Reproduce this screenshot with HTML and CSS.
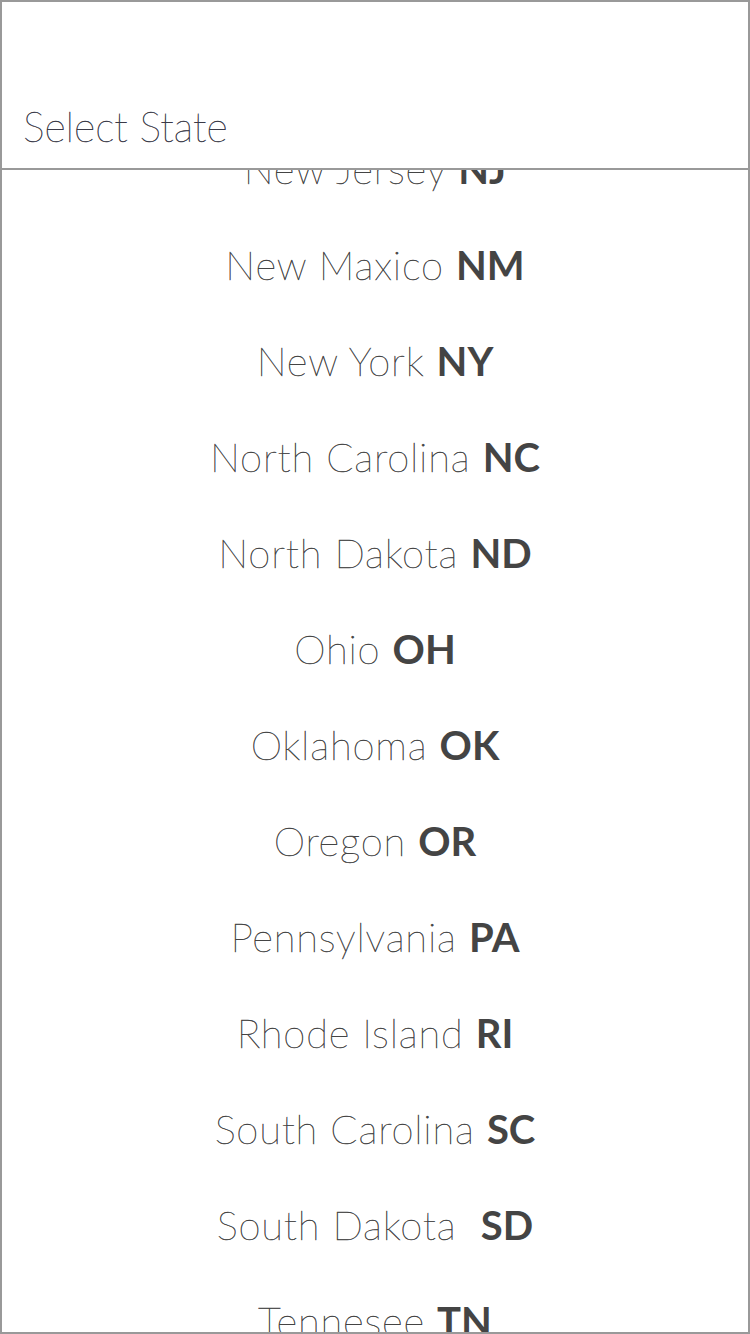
FILE: index.html
```html
<!DOCTYPE html>
<html lang="en">
<head>
<meta charset="utf-8">
<title>Select State</title>
<link rel="stylesheet" href="styles.css">
</head>
<body>
<div class="frame">
  <header class="header">
    <div class="title">Select State</div>
  </header>
  <div class="list">
    <ul class="items">
      <li class="item">New Jersey <b>NJ</b></li>
      <li class="item">New Maxico <b>NM</b></li>
      <li class="item">New York <b>NY</b></li>
      <li class="item">North Carolina <b>NC</b></li>
      <li class="item">North Dakota <b>ND</b></li>
      <li class="item">Ohio <b>OH</b></li>
      <li class="item">Oklahoma <b>OK</b></li>
      <li class="item">Oregon <b>OR</b></li>
      <li class="item">Pennsylvania <b>PA</b></li>
      <li class="item">Rhode Island <b>RI</b></li>
      <li class="item">South Carolina <b>SC</b></li>
      <li class="item">South Dakota&nbsp; <b>SD</b></li>
      <li class="item">Tennesee <b>TN</b></li>
    </ul>
  </div>
</div>
</body>
</html>
```
FILE: styles.css
```css
html, body {
  margin: 0;
  padding: 0;
  background: #fff;
}
.frame {
  width: 750px;
  height: 1334px;
  box-sizing: border-box;
  border: 2px solid #999;
  display: flex;
  flex-direction: column;
  overflow: hidden;
  font-family: "Lato", "Liberation Sans", sans-serif;
}
.header {
  height: 168px;
  flex: none;
  border-bottom: 2px solid #999;
  display: flex;
  align-items: flex-end;
  padding-left: 21px;
  box-sizing: border-box;
  position: relative;
  z-index: 1;
  background: #fff;
}
.title {
  font-size: 41px;
  font-weight: 100;
  color: #3a3a48;
  -webkit-text-stroke: 0.45px #3a3a48;
  line-height: 1;
  margin-bottom: 21px;
}
.list {
  flex: 1;
  overflow: hidden;
}
.items {
  list-style: none;
  margin: -49px 0 0 0;
  padding: 0;
}
.item {
  height: 96px;
  line-height: 96px;
  text-align: center;
  font-size: 40px;
  font-weight: 100;
  letter-spacing: 0.8px;
  color: #444;
  -webkit-text-stroke: 0.45px #444;
  white-space: pre;
}
.item b {
  font-weight: 700;
  letter-spacing: 0;
  color: #444;
  -webkit-text-stroke: 0;
}
```
